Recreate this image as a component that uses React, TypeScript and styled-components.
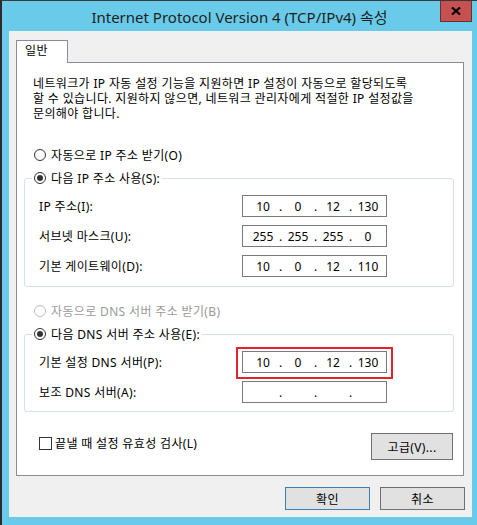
import React from "react";
import styled, { createGlobalStyle, css } from "styled-components";

const GlobalStyle = createGlobalStyle`
  html, body {
    margin: 0;
    padding: 0;
    background: #2b2b2b;
  }
  body {
    font-family: "Noto Sans", "Noto Sans CJK KR", sans-serif;
    font-size: 12px;
    color: #000;
  }
`;

const IpField = ({ octets, highlight }: { octets: string[]; highlight?: boolean }) => (
  <IpBox $highlight={highlight}>
    {octets.map((o, i) => (
      <React.Fragment key={i}>
        <Octet>{o}</Octet>
        {i < 3 && <Dot>.</Dot>}
      </React.Fragment>
    ))}
  </IpBox>
);

const Radio = ({
  label,
  checked,
  disabled,
}: {
  label: string;
  checked?: boolean;
  disabled?: boolean;
}) => (
  <RadioLabel $disabled={disabled}>
    <RadioCircle $disabled={disabled}>{checked && <RadioDot />}</RadioCircle>
    <span>{label}</span>
  </RadioLabel>
);

export default function App() {
  return (
    <>
      <GlobalStyle />
      <Window>
        <TitleBar>
          <Title>Internet Protocol Version 4 (TCP/IPv4) 속성</Title>
          <CloseButton>
            <svg width="10" height="8" viewBox="0 0 10 8">
              <path d="M1 0.5 L9 7.5 M9 0.5 L1 7.5" stroke="#000" strokeWidth="2.2" />
            </svg>
          </CloseButton>
        </TitleBar>
        <Client>
          <TabStrip>
            <Tab>일반</Tab>
          </TabStrip>
          <Panel>
            <Description>
              <Line>네트워크가 IP 자동 설정 기능을 지원하면 IP 설정이 자동으로 할당되도록</Line>
              <Line>할 수 있습니다. 지원하지 않으면, 네트워크 관리자에게 적절한 IP 설정값을</Line>
              <Line>문의해야 합니다.</Line>
            </Description>

            <TopRadio $gap={24}>
              <Radio label="자동으로 IP 주소 받기(O)" />
            </TopRadio>
            <Group $padBottom={9}>
              <Legend>
                <Radio label="다음 IP 주소 사용(S):" checked />
              </Legend>
              <FieldGrid>
                <span>IP 주소(I):</span>
                <IpField octets={["10", "0", "12", "130"]} />
                <span>서브넷 마스크(U):</span>
                <IpField octets={["255", "255", "255", "0"]} />
                <span>기본 게이트웨이(D):</span>
                <IpField octets={["10", "0", "12", "110"]} />
              </FieldGrid>
            </Group>

            <TopRadio $gap={14}>
              <Radio label="자동으로 DNS 서버 주소 받기(B)" disabled />
            </TopRadio>
            <Group $padBottom={8}>
              <Legend>
                <Radio label="다음 DNS 서버 주소 사용(E):" checked />
              </Legend>
              <FieldGrid>
                <span>기본 설정 DNS 서버(P):</span>
                <IpField octets={["10", "0", "12", "130"]} highlight />
                <span>보조 DNS 서버(A):</span>
                <IpField octets={["", "", "", ""]} />
              </FieldGrid>
            </Group>

            <PanelFooter>
              <CheckLabel>
                <CheckBox />
                <span>끝낼 때 설정 유효성 검사(L)</span>
              </CheckLabel>
              <AdvancedButton>고급(V)...</AdvancedButton>
            </PanelFooter>
          </Panel>
          <ButtonRow>
            <DialogButton $primary>확인</DialogButton>
            <DialogButton>취소</DialogButton>
          </ButtonRow>
        </Client>
      </Window>
    </>
  );
}

const Window = styled.div`
  width: 477px;
  height: 525px;
  box-sizing: border-box;
  border-top: 1px solid #3a3a3a;
  border-left: 2px solid #2b2b2b;
  background: #69cbe9;
  display: flex;
  flex-direction: column;
`;

const TitleBar = styled.div`
  height: 30px;
  display: grid;
  grid-template-columns: 37px 1fr 37px;
  align-items: center;
`;

const Title = styled.div`
  grid-column: 2;
  text-align: center;
  font-size: 15px;
  color: #1e1e1e;
  white-space: nowrap;
`;

const CloseButton = styled.div`
  grid-column: 3;
  align-self: start;
  width: 32px;
  height: 21px;
  box-sizing: border-box;
  background: #c75050;
  border: 1px solid #6b3131;
  border-top: none;
  display: flex;
  align-items: center;
  justify-content: center;
`;

const Client = styled.div`
  flex: 1;
  margin: 0 5px 8px 7px;
  background: #f0f0f0;
  padding: 9px 7px 0 7px;
  display: flex;
  flex-direction: column;
`;

const TabStrip = styled.div`
  display: flex;
`;

const Tab = styled.div`
  position: relative;
  z-index: 1;
  width: 52px;
  height: 23px;
  box-sizing: border-box;
  margin-bottom: -1px;
  padding-left: 8px;
  line-height: 20px;
  letter-spacing: 0.35px;
  border: 1px solid #898c95;
  border-bottom: none;
  background: #fff;
`;

const Panel = styled.div`
  width: 448px;
  height: 414px;
  box-sizing: border-box;
  border: 1px solid #898c95;
  background: #fff;
  padding: 13px 9px 0 7px;
  display: flex;
  flex-direction: column;
  letter-spacing: 0.35px;
`;

const Description = styled.div`
  padding-left: 9px;
  display: flex;
  flex-direction: column;
`;

const Line = styled.div`
  height: 15px;
  line-height: 15px;
  white-space: nowrap;
`;

const TopRadio = styled.div<{ $gap: number }>`
  margin-top: ${(p) => p.$gap}px;
  padding-left: 10px;
`;

const RadioLabel = styled.label<{ $disabled?: boolean }>`
  display: flex;
  align-items: center;
  gap: 5px;
  height: 20px;
  white-space: nowrap;
  color: ${(p) => (p.$disabled ? "#9a9a9a" : "#000")};
`;

const RadioCircle = styled.span<{ $disabled?: boolean }>`
  width: 12px;
  height: 12px;
  box-sizing: border-box;
  border-radius: 50%;
  border: 1px solid ${(p) => (p.$disabled ? "#bcbcbc" : "#333")};
  background: #fff;
  display: flex;
  align-items: center;
  justify-content: center;
`;

const RadioDot = styled.span`
  width: 6px;
  height: 6px;
  border-radius: 50%;
  background: #333;
`;

const Group = styled.fieldset<{ $padBottom: number }>`
  margin: 3px 0 0 0;
  min-width: 0;
  border: 1px solid #d5dfe5;
  border-radius: 3px;
  padding: 7px 0 ${(p) => p.$padBottom}px 14px;
`;

const Legend = styled.legend`
  margin-left: -7px;
  padding: 0 2px;
  height: 20px;
`;

const FieldGrid = styled.div`
  display: grid;
  grid-template-columns: 203px 145px;
  row-gap: 8px;
  align-items: center;
  white-space: nowrap;
`;

const IpBox = styled.div<{ $highlight?: boolean }>`
  position: relative;
  height: 22px;
  box-sizing: border-box;
  border: 1px solid #7a7a7a;
  background: #fff;
  padding-left: 6px;
  display: grid;
  grid-template-columns: 28px 7px 28px 7px 28px 7px 28px;
  align-items: center;
  text-align: center;
  letter-spacing: 0;
  ${(p) =>
    p.$highlight &&
    css`
      &::after {
        content: "";
        position: absolute;
        top: -5px;
        left: -7px;
        right: -7px;
        bottom: -7px;
        border: 2px solid #e3232b;
      }
    `}
`;

const Octet = styled.span``;

const Dot = styled.span``;

const PanelFooter = styled.div`
  margin-top: 21px;
  padding: 0 1px 0 15px;
  display: flex;
  justify-content: space-between;
  align-items: flex-start;
`;

const CheckLabel = styled.label`
  display: flex;
  align-items: center;
  gap: 3px;
  height: 20px;
`;

const CheckBox = styled.span`
  width: 13px;
  height: 13px;
  box-sizing: border-box;
  border: 1px solid #333;
  background: #fff;
`;

const AdvancedButton = styled.button`
  width: 82px;
  height: 27px;
  border: 1px solid #707070;
  background: #e1e1e1;
  font: inherit;
  letter-spacing: 0.35px;
  color: #000;
  padding: 0;
`;

const ButtonRow = styled.div`
  margin-top: 11px;
  display: flex;
  justify-content: flex-end;
  gap: 10px;
`;

const DialogButton = styled.button<{ $primary?: boolean }>`
  width: 85px;
  height: 23px;
  border: 1px solid ${(p) => (p.$primary ? "#3c7fb1" : "#707070")};
  background: #e1e1e1;
  font: inherit;
  letter-spacing: 0.35px;
  color: #000;
  padding: 0;
`;
